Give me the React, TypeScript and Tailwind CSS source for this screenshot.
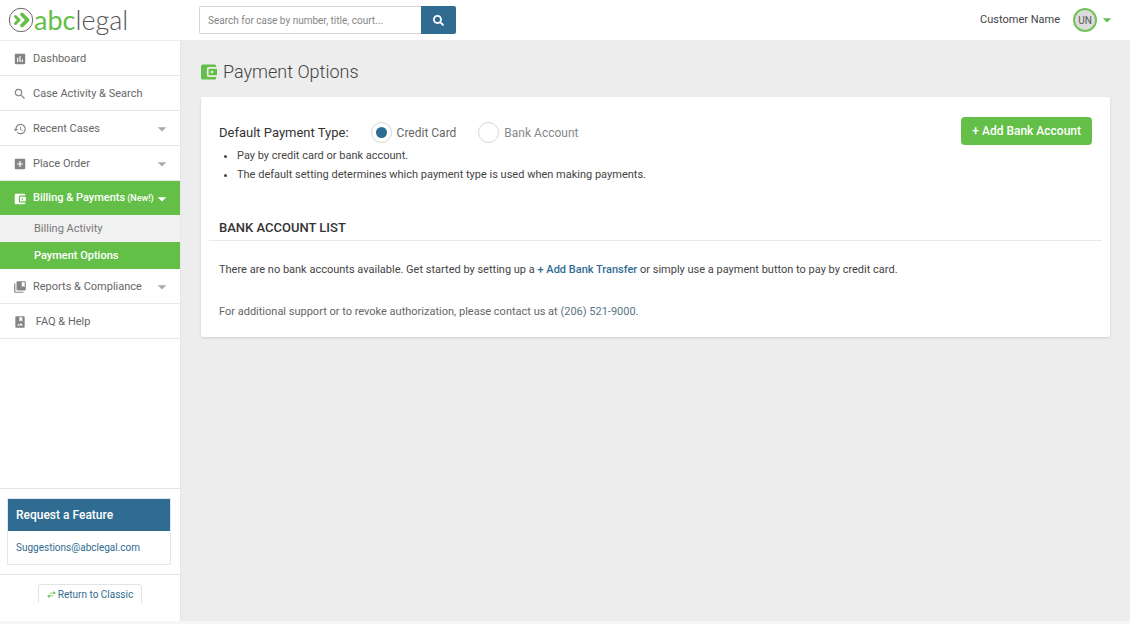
import { useState } from "react";
import clsx from "clsx";
import type { IconType } from "react-icons";
import { FaSearch } from "react-icons/fa";
import {
  MdAccountBalanceWallet,
  MdAddBox,
  MdArrowDropDown,
  MdAssessment,
  MdCollectionsBookmark,
  MdHistory,
  MdPhotoAlbum,
  MdSearch,
} from "react-icons/md";

interface NavItem {
  label: string;
  icon: IconType;
  tag?: string;
  expandable?: boolean;
  children?: string[];
}

const NAV_ITEMS: NavItem[] = [
  { label: "Dashboard", icon: MdAssessment },
  { label: "Case Activity & Search", icon: MdSearch },
  { label: "Recent Cases", icon: MdHistory, expandable: true },
  { label: "Place Order", icon: MdAddBox, expandable: true },
  {
    label: "Billing & Payments",
    tag: "(New!)",
    icon: MdAccountBalanceWallet,
    expandable: true,
    children: ["Billing Activity", "Payment Options"],
  },
  { label: "Reports & Compliance", icon: MdCollectionsBookmark, expandable: true },
  { label: "\u00a0FAQ & Help", icon: MdPhotoAlbum },
];

const PAYMENT_TYPES = ["Credit Card", "Bank Account"];

function Logo() {
  return (
    <a href="#" className="flex items-center" aria-label="abclegal">
      <svg viewBox="0 0 26 26" className="size-[26px] shrink-0" fill="none">
        <circle cx="13" cy="13" r="11.7" stroke="#555" strokeWidth="0.9" />
        <path d="M7.5 9.5l3.5 3.5-3.5 3.5" stroke="#63bf47" strokeWidth="3" strokeLinecap="round" strokeLinejoin="round" />
        <path d="M14 7.5l5.5 5.5-5.5 5.5" stroke="#63bf47" strokeWidth="3.8" strokeLinecap="round" strokeLinejoin="round" />
      </svg>
      <span className="font-[Lato,sans-serif] text-[27px] leading-6 text-[#63bf47]">abc</span>
      <span className="font-[Lato,sans-serif] text-[27px] leading-6 font-light text-[#555]">legal</span>
    </a>
  );
}

function Header() {
  return (
    <header className="flex h-[41px] items-center border-b border-[#ebebeb] bg-white pr-[13px]">
      <div className="w-[199px] shrink-0 pl-2">
        <Logo />
      </div>
      <form className="flex h-7" onSubmit={(e) => e.preventDefault()}>
        <input
          type="text"
          aria-label="Search cases"
          placeholder="Search for case by number, title, court..."
          className="w-[222px] rounded-l-xs border border-r-0 border-[#d5d7dc] px-2 text-[10px] text-[#444] outline-none placeholder:text-[#858585]"
        />
        <button type="submit" aria-label="Search" className="flex w-[35px] items-center justify-center rounded-r-xs bg-[#306c92] text-white">
          <FaSearch size={11} />
        </button>
      </form>
      <button type="button" className="ml-auto flex items-center text-[11px] text-[#444]">
        Customer Name
        <span className="ml-[13px] flex size-6 items-center justify-center rounded-full border-2 border-[#72c45a] bg-[#dcdcdc] text-[10px] text-[#555]">
          UN
        </span>
        <MdArrowDropDown size={20} className="text-[#63bf47]" />
      </button>
    </header>
  );
}

function Sidebar() {
  return (
    <aside className="flex w-[181px] shrink-0 flex-col border-r border-[#e4e4e4] bg-white text-[11px]">
      <nav>
        {NAV_ITEMS.map(({ label, icon: Icon, tag, expandable, children }) => (
          <div key={label}>
            <a
              href="#"
              className={clsx(
                "flex items-center border-b pt-[2px] pr-3 pl-[13px]",
                children
                  ? "h-[34px] border-[#63bf47] bg-[#63bf47] font-medium text-white"
                  : "h-[35px] border-[#e8e8e8] text-[#666]",
              )}
            >
              <Icon size={14} className={clsx("mr-[6px] shrink-0", !children && "text-[#858585]")} />
              <span className="whitespace-nowrap">{label}</span>
              {tag && <span className="ml-[2px] text-[9px]">{tag}</span>}
              {expandable && (
                <MdArrowDropDown
                  size={12}
                  viewBox="5 5 14 14"
                  className={clsx("ml-auto shrink-0", !children && "text-[#aaa]")}
                />
              )}
            </a>
            {children?.map((child) => (
              <a
                key={child}
                href="#"
                className={clsx(
                  "flex h-[27px] items-center pt-[2px] pl-[34px]",
                  child === "Payment Options" ? "bg-[#63bf47] font-medium text-white" : "bg-[#f1f1f1] text-[#777]",
                )}
              >
                {child}
              </a>
            ))}
          </div>
        ))}
      </nav>

      <div className="mt-auto border-t border-[#e4e4e4] py-[9px] pr-[9px] pl-[7px]">
        <div className="border border-[#dfe8ee]">
          <h2 className="flex h-8 items-center bg-[#306c92] px-2 text-xs font-medium text-white">Request a Feature</h2>
          <a href="mailto:Suggestions@abclegal.com" className="flex h-[33px] items-center px-2 text-[10px] text-[#306c92]">
            Suggestions@abclegal.com
          </a>
        </div>
      </div>
      <div className="flex h-[47px] justify-center border-t border-[#e4e4e4] pt-[9px]">
        <a
          href="#"
          className="flex h-[19px] items-center gap-[2px] rounded-t-sm border border-b-0 border-[#e2e2e2] px-2 text-[10px] text-[#306c92]"
        >
          <svg viewBox="0 0 10 10" className="size-[9px]" fill="#63bf47">
            <path d="M3 3h4V1l3 2.5-3 1V4H3zM7 6H3V5L0 7l3 2V7h4z" />
          </svg>
          Return to Classic
        </a>
      </div>
    </aside>
  );
}

function PaymentTypePicker() {
  const [selected, setSelected] = useState("Credit Card");

  return (
    <fieldset className="flex items-center">
      <legend className="float-left mr-[22px] text-[13px] text-[#333]">Default Payment Type:</legend>
      {PAYMENT_TYPES.map((type) => (
        <label
          key={type}
          className={clsx("mr-[22px] flex items-center gap-[5px] text-xs", selected === type ? "text-[#666]" : "text-[#888]")}
        >
          <input
            type="radio"
            name="payment-type"
            checked={selected === type}
            onChange={() => setSelected(type)}
            className="size-[21px] appearance-none rounded-full border border-[#d5d5d5] bg-white bg-clip-content p-[4px] checked:bg-[#306c92]"
          />
          {type}
        </label>
      ))}
    </fieldset>
  );
}

function PaymentOptions() {
  return (
    <main className="min-w-0 flex-1 bg-[#ededed] px-5 pt-[17px]">
      <h1 className="flex items-center gap-[6px] text-[18px] leading-7 font-light text-[#444]">
        <MdAccountBalanceWallet size={16} viewBox="3 3 19 18" className="text-[#63bf47]" />
        Payment Options
      </h1>

      <section className="mt-[11px] rounded-xs bg-white px-2 pt-5 pb-[15px] text-[#444] shadow-sm">
        <div className="flex items-start justify-between px-[10px]">
          <div>
            <div className="pt-[5px]">
              <PaymentTypePicker />
            </div>
            <ul className="ml-[18px] list-disc pt-[3px] text-[11px] leading-[19px]">
              <li>Pay by credit card or bank account.</li>
              <li>The default setting determines which payment type is used when making payments.</li>
            </ul>
          </div>
          <button type="button" className="h-7 rounded-sm bg-[#63bf47] px-[11px] text-xs font-medium text-white">
            + Add Bank Account
          </button>
        </div>

        <h2 className="mt-[34px] border-b border-[#e8e8e8] px-[10px] pb-[2px] text-[13px] leading-5 font-medium text-[#333]">
          BANK ACCOUNT LIST
        </h2>
        <div className="px-[10px] pt-[19px] text-[11px] leading-5">
          <p>
            There are no bank accounts available. Get started by setting up a{" "}
            <a href="#" className="font-medium text-[#306c92]">
              + Add Bank Transfer
            </a>{" "}
            or simply use a payment button to pay by credit card.
          </p>
          <p className="mt-[22px] text-[#666]">
            For additional support or to revoke authorization, please contact us at{" "}
            <a href="tel:2065219000" className="text-[#5a7486]">
              (206) 521-9000.
            </a>
          </p>
        </div>
      </section>
    </main>
  );
}

export default function App() {
  return (
    <div className="flex min-h-screen flex-col bg-[#f7f7f7] pb-[3px] font-[Roboto,sans-serif]">
      <Header />
      <div className="flex flex-1">
        <Sidebar />
        <PaymentOptions />
      </div>
    </div>
  );
}
